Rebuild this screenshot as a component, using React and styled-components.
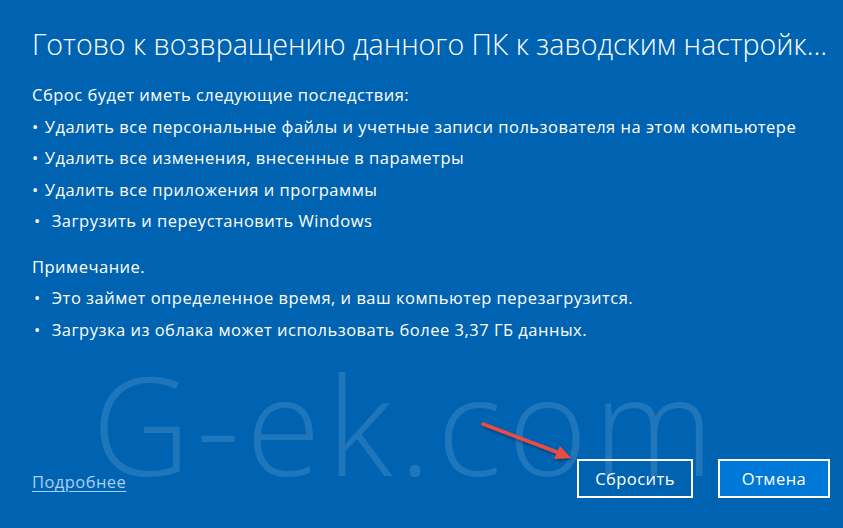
import React from "react";
import styled, { createGlobalStyle } from "styled-components";

const Global = createGlobalStyle`
  html, body { margin: 0; padding: 0; background: #0063b1; }
  body { width: 843px; height: 528px; overflow: hidden; }
  * { box-sizing: border-box; }
`;

const Dialog = styled.div`
  position: relative;
  width: 843px;
  height: 528px;
  background: #0063b1;
  color: #ffffff;
  font-family: "Open Sans", "Noto Sans", sans-serif;
  display: flex;
  flex-direction: column;
  padding: 25px 0 0 32px;
  overflow: hidden;
`;

const Title = styled.h1`
  margin: 0;
  font-size: 28.6px;
  font-weight: 300;
  line-height: 38px;
  white-space: nowrap;
`;

const Section = styled.div`
  display: flex;
  flex-direction: column;
  margin-top: ${(p) => p.$top}px;
`;

const Line = styled.div`
  font-size: 16.5px;
  line-height: 31.5px;
  height: 31.5px;
  white-space: nowrap;
  letter-spacing: 0.5px;
  padding-left: ${(p) => (p.$wide ? 2 : 0)}px;
`;

const Bullet = styled.span`
  display: inline-block;
  margin-right: ${(p) => (p.$wide ? 11 : 6)}px;
`;

const Footer = styled.div`
  margin-top: auto;
  margin-bottom: 30px;
  display: flex;
  align-items: center;
  padding-right: 13px;
  gap: 25px;
`;

const Link = styled.a`
  font-size: 16.5px;
  letter-spacing: 0.45px;
  color: #a8d0f2;
  text-decoration: underline;
  text-underline-offset: 3px;
  margin-right: auto;
  margin-top: 6px;
  cursor: pointer;
`;

const Button = styled.button`
  height: 39px;
  width: ${(p) => p.$w}px;
  border: 2px solid #ffffff;
  background: ${(p) => (p.$primary ? "#0078d7" : "transparent")};
  color: #ffffff;
  font-family: "Open Sans", "Noto Sans", sans-serif;
  font-size: 16.5px;
  letter-spacing: 0.45px;
  padding: 0;
  cursor: pointer;
`;

const Watermark = styled.div`
  position: absolute;
  left: 92px;
  top: 356px;
  font-family: "Open Sans", sans-serif;
  font-weight: 300;
  font-size: 136px;
  line-height: 136px;
  letter-spacing: 6px;
  color: rgba(255, 255, 255, 0.12);
  pointer-events: none;
  white-space: nowrap;
`;

const Arrow = styled.svg`
  position: absolute;
  left: 474px;
  top: 414px;
  overflow: visible;
`;

const Bul = ({ wide, children }) => (
  <Line $wide={wide}>
    <Bullet $wide={wide}>•</Bullet>
    {children}
  </Line>
);

export default function App() {
  return (
    <>
      <Global />
      <Dialog>
        <Title>Готово к возвращению данного ПК к заводским настройк...</Title>
        <Section $top={16}>
          <Line>Сброс будет иметь следующие последствия:</Line>
          <Bul>Удалить все персональные файлы и учетные записи пользователя на этом компьютере</Bul>
          <Bul>Удалить все изменения, внесенные в параметры</Bul>
          <Bul>Удалить все приложения и программы</Bul>
          <Bul wide>Загрузить и переустановить Windows</Bul>
        </Section>
        <Section $top={14}>
          <Line>Примечание.</Line>
          <Bul wide>Это займет определенное время, и ваш компьютер перезагрузится.</Bul>
          <Bul wide>Загрузка из облака может использовать более 3,37 ГБ данных.</Bul>
        </Section>
        <Footer>
          <Link>Подробнее</Link>
          <Button $w={116}>Сбросить</Button>
          <Button $w={112} $primary>Отмена</Button>
        </Footer>
        <Watermark>G-ek.com</Watermark>
        <Arrow width="110" height="60" viewBox="0 0 110 60">
          <defs>
            <filter id="sh" x="-20%" y="-50%" width="140%" height="200%">
              <feDropShadow dx="1" dy="2" stdDeviation="1.5" floodColor="#000" floodOpacity="0.35" />
            </filter>
          </defs>
          <g filter="url(#sh)">
            <line x1="9" y1="10" x2="88" y2="40" stroke="#ec4b43" strokeWidth="3.5" strokeLinecap="round" />
            <polygon points="97,44 80,45 86,32" fill="#ec4b43" />
          </g>
        </Arrow>
      </Dialog>
    </>
  );
}
